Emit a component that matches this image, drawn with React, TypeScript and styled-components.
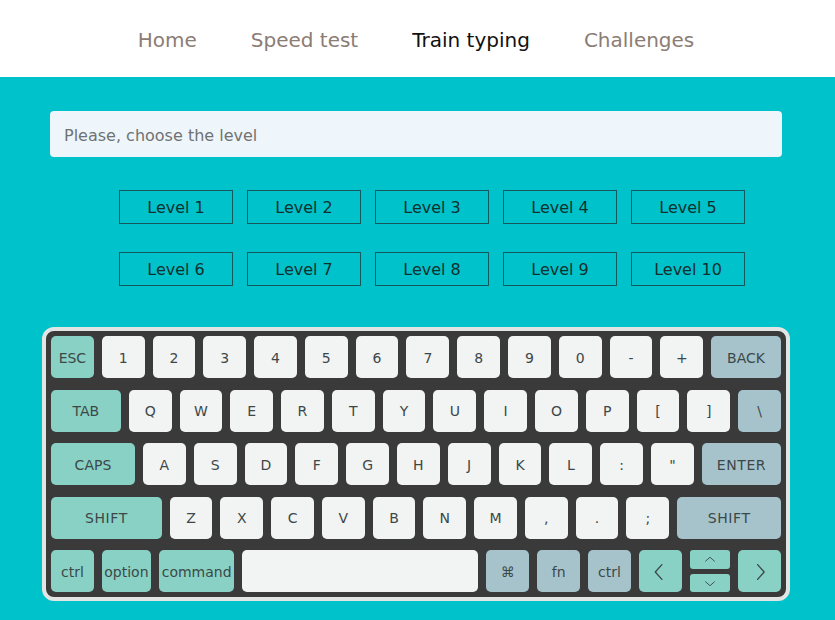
import React from "react";
import styled, { createGlobalStyle } from "styled-components";

const GlobalStyle = createGlobalStyle`
  html, body {
    margin: 0;
    padding: 0;
    background: #00c2cb;
    font-family: "DejaVu Sans", Verdana, sans-serif;
  }
  * { box-sizing: border-box; }
`;

const Nav = styled.nav`
  height: 77px;
  background: #ffffff;
  display: flex;
  justify-content: center;
  align-items: center;
  gap: 54px;
  padding-right: 3px;
  padding-top: 2px;
`;

const NavLink = styled.a<{ $active?: boolean }>`
  font-size: 20px;
  color: ${(p) => (p.$active ? "#111111" : "#8b7c74")};
  text-decoration: none;
  cursor: pointer;
`;

const Main = styled.main`
  width: 748px;
  margin-left: 42px;
  padding-top: 34px;
  display: flex;
  flex-direction: column;
`;

const LevelInput = styled.input`
  margin: 0 8px;
  width: 732px;
  height: 46px;
  border: none;
  border-radius: 4px;
  background: #eef6fc;
  padding: 2px 14px 0;
  font-family: "DejaVu Sans", Verdana, sans-serif;
  font-size: 16px;
  color: #333;
  outline: none;
  &::placeholder {
    color: #707272;
  }
`;

const LevelGrid = styled.div`
  margin: 33px 0 0 77px;
  display: grid;
  grid-template-columns: repeat(5, 114px);
  column-gap: 14px;
  row-gap: 28px;
`;

const LevelButton = styled.button`
  height: 34px;
  border: 1px solid #14575c;
  background: transparent;
  color: #10302f;
  font-family: "DejaVu Sans", Verdana, sans-serif;
  font-size: 16px;
  padding: 1px 0 0;
  cursor: pointer;
`;

const Keyboard = styled.div`
  margin-top: 41px;
  width: 748px;
  border: 4px solid #e3e5e4;
  border-radius: 12px;
  background: #3a3a3a;
  padding: 5px;
  display: flex;
  flex-direction: column;
  gap: 11.5px;
`;

const Row = styled.div`
  display: flex;
  gap: 8px;
  height: 42px;
`;

type Tone = "light" | "mint" | "slate";

const toneBg: Record<Tone, string> = {
  light: "#f2f3f3",
  mint: "#89d1c4",
  slate: "#a6c3cb",
};

const Key = styled.div<{ $tone?: Tone; $grow?: number; $spaced?: boolean }>`
  flex: ${(p) => p.$grow ?? 1} 1 0;
  min-width: 0;
  background: ${(p) => toneBg[p.$tone ?? "light"]};
  border-radius: 5px;
  display: flex;
  align-items: center;
  justify-content: center;
  padding-top: 1px;
  font-size: 14px;
  color: #3c4848;
  letter-spacing: ${(p) => (p.$spaced ? "0.6px" : "0")};
  white-space: nowrap;
  overflow: hidden;
`;

const ArrowStack = styled.div`
  flex: 0.95 1 0;
  min-width: 0;
  display: flex;
  flex-direction: column;
  gap: 5px;
`;

const HalfKey = styled.div`
  flex: 1;
  background: #89d1c4;
  border-radius: 3px;
  display: flex;
  align-items: center;
  justify-content: center;
`;

const Chevron = ({ dir, size }: { dir: "left" | "right" | "up" | "down"; size: number }) => {
  const pts: Record<string, string> = {
    left: "14,3 6,12 14,21",
    right: "10,3 18,12 10,21",
    up: "4,15 12,8 20,15",
    down: "4,9 12,16 20,9",
  };
  const w = dir === "left" || dir === "right" ? size * 0.75 : size;
  const h = dir === "left" || dir === "right" ? size : size * 0.6;
  const vb = dir === "left" || dir === "right" ? "2 0 20 24" : "0 4 24 15";
  return (
    <svg width={w} height={h} viewBox={vb} fill="none" stroke="#3c4848" strokeWidth={1.6} strokeLinecap="round" strokeLinejoin="round">
      <polyline points={pts[dir]} />
    </svg>
  );
};

type K = { l: string; t?: Tone; g?: number; s?: boolean };

const row1: K[] = [
  { l: "ESC", t: "mint" },
  ..."1234567890-+".split("").map((c) => ({ l: c })),
  { l: "BACK", t: "slate", g: 1.63 },
];

const row2: K[] = [
  { l: "TAB", t: "mint", g: 1.63 },
  ..."QWERTYUIOP[]".split("").map((c) => ({ l: c })),
  { l: "\\", t: "slate" },
];

const row3: K[] = [
  { l: "CAPS", t: "mint", g: 1.96 },
  ..."ASDFGHJKL:".split("").map((c) => ({ l: c })),
  { l: "\"" },
  { l: "ENTER", t: "slate", g: 1.85, s: true },
];

const row4: K[] = [
  { l: "SHIFT", t: "mint", g: 2.59, s: true },
  ..."ZXCVBNM,.;".split("").map((c) => ({ l: c })),
  { l: "SHIFT", t: "slate", g: 2.43, s: true },
];

const levels = Array.from({ length: 10 }, (_, i) => `Level ${i + 1}`);

const renderRow = (keys: K[]) =>
  keys.map((k, i) => (
    <Key key={i} $tone={k.t} $grow={k.g} $spaced={k.s}>
      {k.l}
    </Key>
  ));

export default function App() {
  return (
    <>
      <GlobalStyle />
      <Nav>
        <NavLink>Home</NavLink>
        <NavLink>Speed test</NavLink>
        <NavLink $active>Train typing</NavLink>
        <NavLink>Challenges</NavLink>
      </Nav>
      <Main>
        <LevelInput placeholder="Please, choose the level" />
        <LevelGrid>
          {levels.map((l) => (
            <LevelButton key={l}>{l}</LevelButton>
          ))}
        </LevelGrid>
        <Keyboard>
          <Row>{renderRow(row1)}</Row>
          <Row>{renderRow(row2)}</Row>
          <Row>{renderRow(row3)}</Row>
          <Row>{renderRow(row4)}</Row>
          <Row>
            <Key $tone="mint">ctrl</Key>
            <Key $tone="mint" $grow={1.15}>option</Key>
            <Key $tone="mint" $grow={1.76}>command</Key>
            <Key $grow={5.52}></Key>
            <Key $tone="slate">⌘</Key>
            <Key $tone="slate">fn</Key>
            <Key $tone="slate">ctrl</Key>
            <Key $tone="mint">
              <Chevron dir="left" size={22} />
            </Key>
            <ArrowStack>
              <HalfKey>
                <Chevron dir="up" size={14} />
              </HalfKey>
              <HalfKey>
                <Chevron dir="down" size={14} />
              </HalfKey>
            </ArrowStack>
            <Key $tone="mint">
              <Chevron dir="right" size={22} />
            </Key>
          </Row>
        </Keyboard>
      </Main>
    </>
  );
}
